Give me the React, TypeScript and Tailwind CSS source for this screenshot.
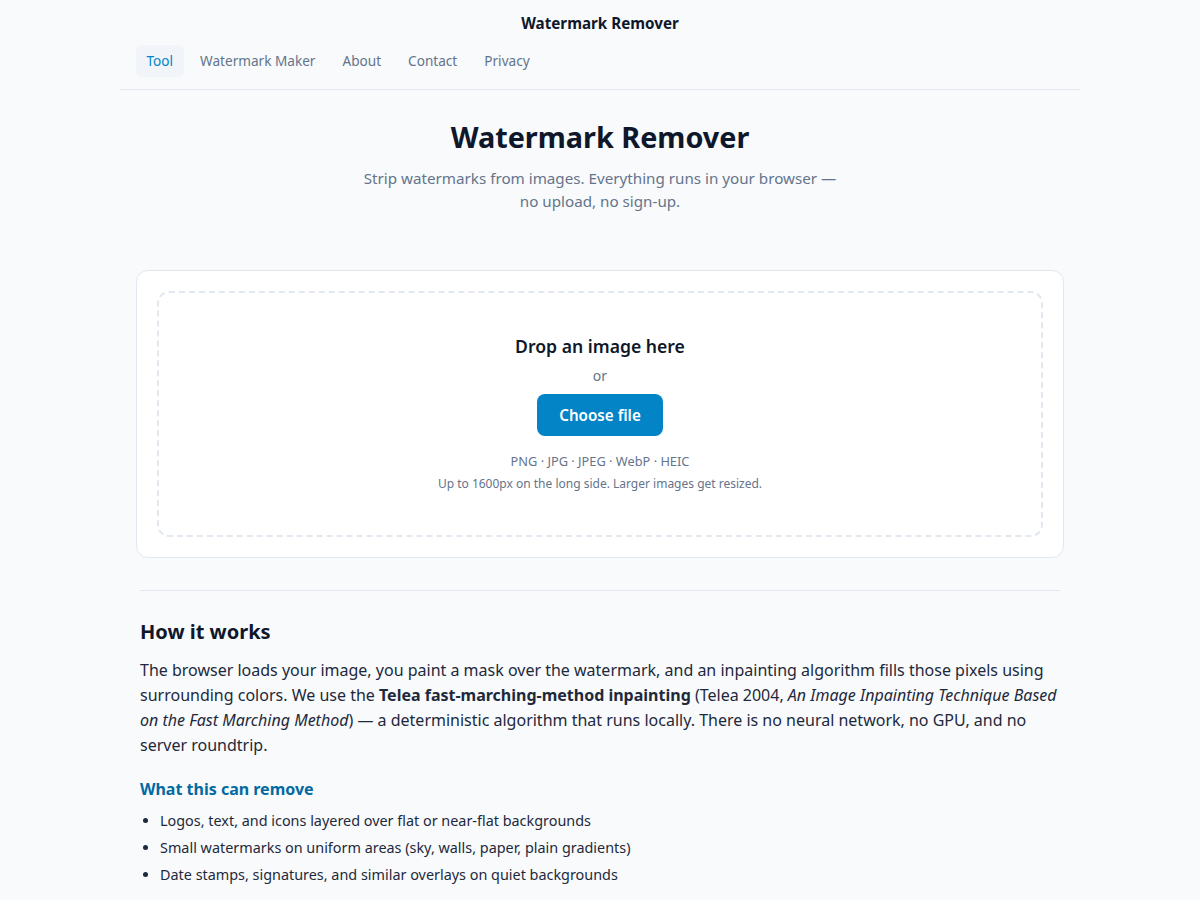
import React from 'react';

const navItems = ['Tool', 'Watermark Maker', 'About', 'Contact', 'Privacy'];

export default function App() {
  return (
    <div className="min-h-screen bg-[#f8fafc] text-[#0f172a]" style={{ fontFamily: '"Noto Sans", sans-serif' }}>
      {/* Header */}
      <header className="mx-auto max-w-[960px] border-b border-[#e2e8f0]">
        <div className="pt-[12px] text-center text-[15.2px] font-bold leading-[22px]">Watermark Remover</div>
        <nav className="flex gap-[6px] px-4 pt-[11px] pb-[12px]">
          {navItems.map((item, i) => (
            <a
              key={item}
              href="#"
              className={
                i === 0
                  ? 'rounded-md bg-[#f1f5f9] px-[10.5px] py-[6px] text-[13.6px] leading-[20px] text-[#0284c7]'
                  : 'rounded-md px-[10.5px] py-[6px] text-[13.6px] leading-[20px] text-[#64748b]'
              }
            >
              {item}
            </a>
          ))}
        </nav>
      </header>

      <main className="mx-auto max-w-[960px] px-4">
        {/* Hero */}
        <section className="pt-[27px] pb-[57px] text-center">
          <h1 className="text-[28.8px] font-bold leading-[40px]">Watermark Remover</h1>
          <p className="mx-auto mt-[10px] max-w-[480px] text-[15.2px] leading-[23px] text-[#64748b]">
            Strip watermarks from images. Everything runs in your browser — no upload, no sign-up.
          </p>
        </section>

        {/* Upload card */}
        <section className="rounded-xl border border-[#e2e8f0] bg-white p-5">
          <div className="flex h-[246px] flex-col items-center rounded-xl border-2 border-dashed border-[#e2e8f0] pt-[41px]">
            <div className="text-[17.6px] font-semibold leading-[24px]">Drop an image here</div>
            <div className="mt-[8px] text-[14px] leading-[20px] text-[#64748b]">or</div>
            <button className="mt-[8px] h-[42px] rounded-lg bg-[#0284c7] px-[22px] text-[15.2px] font-semibold text-white">
              Choose file
            </button>
            <div className="mt-[15px] text-[12.8px] leading-[20px] text-[#64748b]">PNG · JPG · JPEG · WebP · HEIC</div>
            <div className="mt-[4px] text-[12px] leading-[18px] text-[#64748b]">
              Up to 1600px on the long side. Larger images get resized.
            </div>
          </div>
        </section>

        {/* How it works */}
        <section className="mx-1 mt-[32px] border-t border-[#e2e8f0] pt-[27px]">
          <h2 className="text-[20px] font-bold leading-[28px]">How it works</h2>
          <p className="mt-[12px] text-[16px] leading-[25px] text-[#1e293b]">
            The browser loads your image, you paint a mask over the watermark, and an inpainting algorithm fills those
            pixels using surrounding colors. We use the <strong className="font-bold">Telea fast-marching-method inpainting</strong> (Telea
            2004, <em>An Image Inpainting Technique Based on the Fast Marching Method</em>) — a deterministic algorithm
            that runs locally. There is no neural network, no GPU, and no server roundtrip.
          </p>
          <h3 className="mt-[19px] text-[16px] font-bold leading-[24px] text-[#0369a1]">What this can remove</h3>
          <ul className="mt-[6px] list-disc pl-[20px] text-[14.4px] leading-[27px] text-[#1e293b]">
            <li>Logos, text, and icons layered over flat or near-flat backgrounds</li>
            <li>Small watermarks on uniform areas (sky, walls, paper, plain gradients)</li>
            <li>Date stamps, signatures, and similar overlays on quiet backgrounds</li>
          </ul>
        </section>
      </main>
    </div>
  );
}
